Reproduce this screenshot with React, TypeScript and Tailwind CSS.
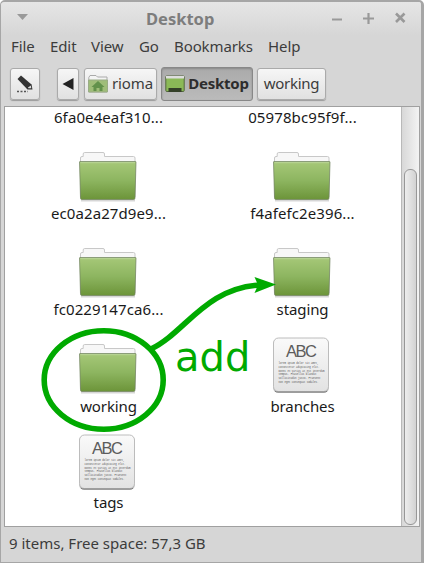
import React from "react";

const FONT = "font-['Noto_Sans',sans-serif]";

function Folder() {
  return (
    <svg width="60" height="52" viewBox="0 0 60 52" className="block">
      <defs>
        <linearGradient id="leaf" x1="0" y1="0" x2="0" y2="1">
          <stop offset="0" stopColor="#a6c878" />
          <stop offset="0.5" stopColor="#8db560" />
          <stop offset="1" stopColor="#6c9439" />
        </linearGradient>
      </defs>
      <path d="M3 49.5H57" stroke="#000" strokeOpacity=".16" strokeWidth="2" />
      <path d="M2.5 46V7Q2.5 5.5 4 5.5H5.2V3Q5.2 1.5 6.7 1.5H25Q26.5 1.5 26.5 3V5.5H55.5Q57 5.5 57 7V46Z" fill="#f7f7f7" stroke="#c8c8c8" />
      <path d="M1.5 11Q1.5 10.5 2 10.5H57.5Q58 10.5 58 11L57 47Q57 48.5 55.5 48.5H4Q2.5 48.5 2.5 47Z" fill="url(#leaf)" stroke="#6f805e" strokeOpacity=".7" />
      <path d="M2.5 11.7H57" stroke="#b9d497" strokeWidth="1" />
    </svg>
  );
}

const LINES = [
  "lorem ipsum dolor sit amet,",
  "consectetur adipiscing elit.",
  "Donec et varius at est interdum",
  "tempus. Phasellus blandit",
  "sollicitudin justo. Praesent",
  "non eget consequat sodales.",
];

function Doc() {
  return (
    <svg width="60" height="60" viewBox="0 0 60 60" className="block">
      <defs>
        <linearGradient id="paper" x1="0" y1="0" x2="0" y2="1">
          <stop offset="0" stopColor="#fafafa" />
          <stop offset="1" stopColor="#e2e2e2" />
        </linearGradient>
      </defs>
      <rect x="1.2" y="4" width="55.6" height="54" rx="5" fill="#777" fillOpacity=".5" />
      <rect x="1.5" y="3" width="55" height="53.5" rx="5" fill="url(#paper)" stroke="#bcbcbc" />
      <path d="M3 56.3Q4 57 6 57H52Q54 57 55 56.3" stroke="#808080" fill="none" />
      <text x="29.5" y="21.5" textAnchor="middle" textLength="31" fontSize="16.5" fontFamily="Liberation Sans, sans-serif" fill="#5c5c5c">ABC</text>
      {LINES.map((t, i) => (
        <text key={t} x="6.5" y={29.2 + i * 3.75} textLength={[40, 41, 46, 38, 42, 40][i]} lengthAdjust="spacingAndGlyphs" fontSize="2.7" fontFamily="Liberation Mono, monospace" fill="#555">{t}</text>
      ))}
    </svg>
  );
}

function Item({ name, kind, tall }: { name: string; kind: "folder" | "doc"; tall?: boolean }) {
  return (
    <div className={`flex w-[194px] flex-col items-center ${tall ? "h-[97px]" : "h-24"}`}>
      <div className={`flex w-full flex-1 justify-center ${kind === "folder" ? "pt-[22px]" : "pt-[14px]"}`}>
        {kind === "folder" ? <Folder /> : <Doc />}
      </div>
      <Label>{name}</Label>
    </div>
  );
}

function Label({ children }: { children: string }) {
  const hash = children.endsWith("...");
  return (
    <div className={`h-[22px] w-[194px] shrink-0 pl-px text-center leading-5 text-[#1a1a1a] ${hash ? "tracking-[0.1px]" : "tracking-[-0.1px]"}`}>
      {children}
    </div>
  );
}

const BTN = "flex h-8 items-center justify-center rounded-[3px] border border-[#aaa] bg-linear-to-b from-[#f6f6f6] to-[#e1e1e1] shadow-[0_1px_1px_#9b9b9b]";

export default function App() {
  return (
    <div className={`relative flex h-[563px] w-[424px] flex-col overflow-hidden rounded-t-[5px] border border-r-[3px] border-t-2 border-[#a6a6a6] bg-[#d6d6d6] text-[15px] text-[#3c3c3c] ${FONT}`}>
      <header className="flex h-[33px] shrink-0 items-center bg-linear-to-b from-[#e6e6e6] to-[#d6d6d6] pl-4">
        <svg width="12" height="8" className="mb-1"><path d="M0 1H11L5.5 7Z" fill="#999" /></svg>
        <h1 className="ml-[117px] w-[73px] text-[16.5px] leading-6 font-bold whitespace-nowrap text-[#7d7d7d]">Desktop</h1>
        <svg width="76" height="14" viewBox="0 0 76 14" className="mb-0.5 ml-[112px]" stroke="#999" fill="none">
          <path d="M1 8.5H11M32 7.5H43M37.5 2V13" strokeWidth="2.2" />
          <path d="M65 2.5L73.5 11M73.5 2.5L65 11" strokeWidth="2.6" />
        </svg>
      </header>
      <nav className="flex h-6 shrink-0 items-center pb-0.5 pl-[10px] leading-[22px] tracking-[-0.1px] whitespace-nowrap">
        <span className="w-[39px]">File</span>
        <span className="w-[41px]">Edit</span>
        <span className="w-[48px]">View</span>
        <span className="w-[35px]">Go</span>
        <span className="w-[94px]">Bookmarks</span>
        <span>Help</span>
      </nav>
      <div className="flex h-[47px] shrink-0 items-start pt-[9px] pl-[9px]">
        <button className={`${BTN} w-[30px]`}>
          <svg width="18" height="20" viewBox="0 0 18 20">
            <path d="M1.5 5L5 1.5L15.5 10.5L16.5 15.5H11.5Z" fill="#333" />
            <path d="M14.8 11.5L15.3 14.3H12.3L12 13.5Z" fill="#ddd" />
            <path d="M1 17.5H12" stroke="#555" strokeWidth="1.5" strokeDasharray="2 1.5" />
          </svg>
        </button>
        <button className={`${BTN} ml-[17px] w-[22px]`}>
          <svg width="14" height="14"><path d="M12.5 1V13L1.5 7Z" fill="#222" /></svg>
        </button>
        <button className={`${BTN} ml-[5px] w-[73px] gap-1`}>
          <svg width="20" height="20" viewBox="0 0 20 20" className="shrink-0">
            <path d="M.8 18V3.5L2 1.5H8L9.5 3H19V18Z" fill="#f4f4f4" stroke="#aaa" />
            <path d="M.5 6H19.5V18H.5Z" fill="#9fbd79" stroke="#9aac86" />
            <path d="M10 7L16.5 13H14.5V17H11.5V14H8.5V17H5.5V13H3.5Z" fill="#62914b" />
          </svg>
          <span className="pb-0.5 tracking-[-0.1px]">rioma</span>
        </button>
        <button className="-mt-px ml-1 flex h-[34px] w-[92px] items-center justify-center gap-[3px] rounded-[3px] border border-[#888] bg-linear-to-b from-[#aaa] to-[#bbb] font-bold text-[#2d2d2d] shadow-[inset_0_1px_2px_#888]">
          <svg width="20" height="20" viewBox="0 0 20 20" className="shrink-0">
            <rect x=".8" y="2" width="18.4" height="15.5" rx="1" fill="#8bb957" stroke="#54673f" />
            <path d="M1 3.2H19" stroke="#ddd" strokeWidth="2.6" />
            <rect x="3.5" y="14" width="13" height="4" fill="#344028" />
          </svg>
          <span className="pb-0.5 tracking-[-0.25px]">Desktop</span>
        </button>
        <button className={`${BTN} ml-1 w-[69px] pb-0.5 tracking-[-0.3px]`}>working</button>
      </div>
      <main className="ml-[3px] flex h-[421px] w-[416px] shrink-0 border border-[#a0a0a0] bg-white">
        <div className="flex w-[396px] flex-wrap content-start overflow-hidden pl-[6px]">
          <Label>6fa0e4eaf310...</Label>
          <Label>05978bc95f9f...</Label>
          <Item name="ec0a2a27d9e9..." kind="folder" />
          <Item name="f4afefc2e396..." kind="folder" />
          <Item name="fc0229147ca6..." kind="folder" />
          <Item name="staging" kind="folder" />
          <Item name="working" kind="folder" tall />
          <Item name="branches" kind="doc" tall />
          <Item name="tags" kind="doc" />
        </div>
        <div className="flex w-[18px] shrink-0 flex-col border-l border-[#b9b9b9] bg-linear-to-r from-[#d8d8d8] to-[#f3f3f3] px-[2px] pt-[62px] pb-px">
          <div className="flex-1 rounded-[6px] border border-[#979797] bg-linear-to-r from-[#ededed] to-[#d2d2d2]" />
        </div>
      </main>
      <footer className="h-8 pl-2 leading-8">9 items, Free space: 57,3 GB</footer>
      <svg width="424" height="563" viewBox="0 0 424 563" className="pointer-events-none absolute -top-0.5 -left-px">
        <ellipse cx="103.7" cy="380" rx="59.5" ry="49.2" fill="none" stroke="#00aa00" strokeWidth="5.6" />
        <path d="M151 349C185 333 205 288 260 285" fill="none" stroke="#00aa00" strokeWidth="5.6" />
        <path d="M276 284.5L254.5 277L258 285L254.5 293Z" fill="#00aa00" />
        <text x="175" y="371" fontSize="40" fontFamily="DejaVu Sans, sans-serif" fill="#00aa00">add</text>
      </svg>
    </div>
  );
}
